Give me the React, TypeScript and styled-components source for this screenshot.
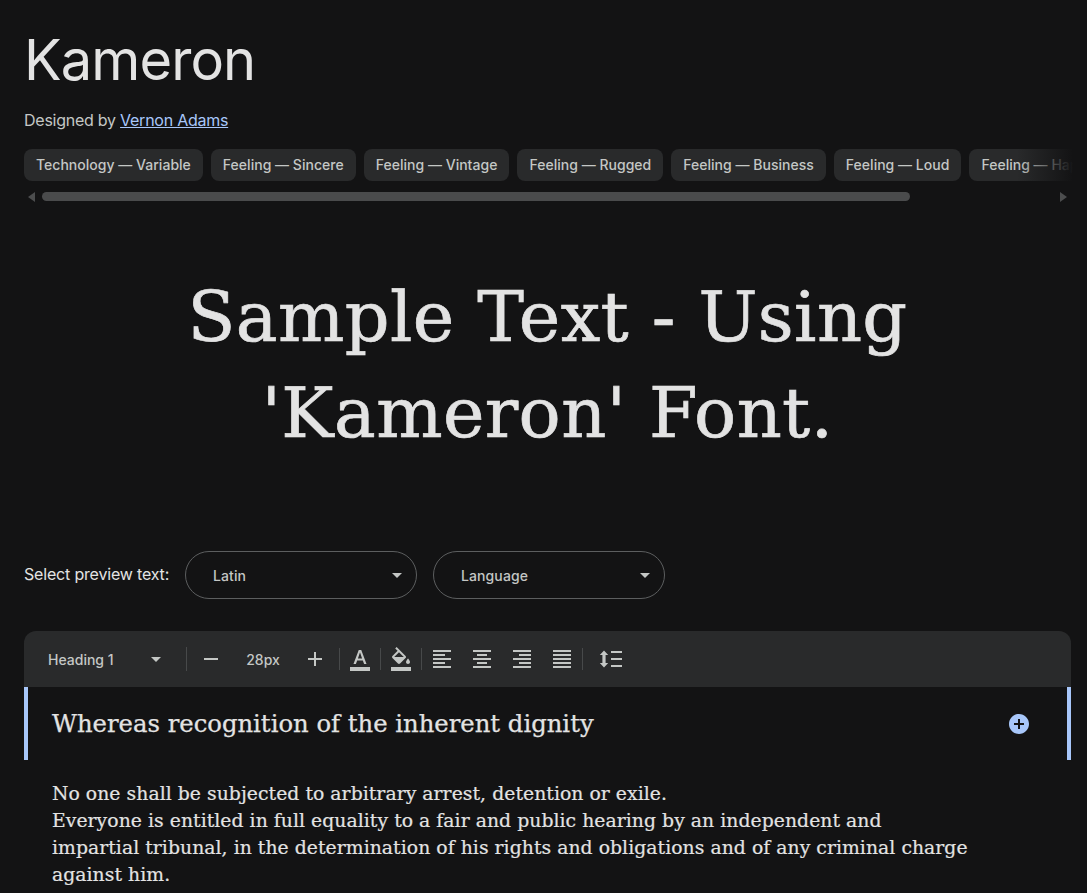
import React from "react"
import styled, { createGlobalStyle } from "styled-components"
import {
  MdAdd,
  MdAddCircle,
  MdArrowDropDown,
  MdFormatAlignCenter,
  MdFormatAlignJustify,
  MdFormatAlignLeft,
  MdFormatAlignRight,
  MdFormatColorFill,
  MdFormatColorText,
  MdRemove,
} from "react-icons/md"

const tags = [
  "Technology — Variable",
  "Feeling — Sincere",
  "Feeling — Vintage",
  "Feeling — Rugged",
  "Feeling — Business",
  "Feeling — Loud",
  "Feeling — Happy",
]

const Global = createGlobalStyle`
  html, body {
    margin: 0;
    height: 893px;
    overflow: hidden;
    background: #131314;
  }
`

const Page = styled.div`
  padding: 0 16px 0 24px;
  color: #e3e3e3;
  font-family: "Inter", "Open Sans", sans-serif;
`

const Title = styled.h1`
  margin: 0;
  padding-top: 26px;
  font-size: 56px;
  line-height: 68px;
  font-weight: 400;
  letter-spacing: -0.9px;
`

const Byline = styled.p`
  margin: 14px 0 0;
  font-size: 16px;
  line-height: 24px;
  letter-spacing: -0.25px;
  color: #c4c7c5;

  a {
    color: #a8c7fa;
  }
`

const TagScroller = styled.div`
  position: relative;
  margin: 17px -16px 0 0;
`

const TagRow = styled.div`
  display: flex;
  gap: 8px;
  overflow: hidden;
`

const Tag = styled.span`
  flex: none;
  padding: 0 12px;
  height: 32px;
  line-height: 32px;
  border-radius: 8px;
  background: #292a2b;
  font-size: 14px;
  font-weight: 500;
  letter-spacing: 0.02px;
  color: #c4c7c5;
`

const TagFade = styled.div`
  position: absolute;
  top: 0;
  right: 0;
  width: 70px;
  height: 32px;
  background: linear-gradient(to right, rgba(19, 19, 20, 0), #131314 80%);
`

const ScrollBar = styled.div`
  display: flex;
  align-items: center;
  height: 9px;
  margin: 11px 16px 0 0;
`

const ScrollArrow = styled.span<{ $right?: boolean }>`
  width: 0;
  height: 0;
  border-style: solid;
  border-color: transparent;
  border-width: 5px 0 5px 7px;
  border-left-color: #4c4d4e;
  margin: 0 4px 0 auto;
  ${p =>
    !p.$right &&
    `
    border-width: 5px 7px 5px 0;
    border-right-color: #4c4d4e;
    margin: 0 0 0 4px;
  `}
`

const ScrollThumb = styled.div`
  width: 868px;
  height: 9px;
  margin-left: 7px;
  border-radius: 5px;
  background: #4a4b4c;
`

const Preview = styled.div`
  margin-top: 68px;
  text-align: center;
  font-family: "DejaVu Serif", serif;
  font-size: 70px;
  line-height: 96px;
  letter-spacing: 0.4px;
  -webkit-text-stroke: 0.7px #e3e3e3;
`

const Controls = styled.div`
  display: flex;
  align-items: center;
  margin-top: 90px;
`

const ControlsLabel = styled.span`
  width: 161px;
  padding-bottom: 2px;
  font-size: 16px;
  letter-spacing: -0.18px;
  color: #e3e3e3;
`

const Select = styled.div`
  box-sizing: border-box;
  display: flex;
  align-items: center;
  justify-content: space-between;
  width: 232px;
  height: 48px;
  margin-right: 16px;
  padding: 0 7px 0 27px;
  border: 1px solid #5c5e5f;
  border-radius: 24px;
  font-size: 14px;
  font-weight: 500;
  letter-spacing: 0.1px;
  color: #c4c7c5;
`

const Caret = styled(MdArrowDropDown)`
  flex: none;
  color: #c4c7c5;
`

const Toolbar = styled.div`
  display: flex;
  align-items: center;
  height: 56px;
  margin-top: 32px;
  padding-left: 24px;
  border-radius: 12px 12px 0 0;
  background: #292a2b;
  font-size: 14px;
  font-weight: 500;
  letter-spacing: 0;
  color: #c4c7c5;
`

const StyleSelect = styled.div`
  display: flex;
  align-items: center;
  justify-content: space-between;
  width: 138px;
  padding-right: 18px;
  box-sizing: border-box;
`

const Divider = styled.span<{ $tall?: boolean }>`
  flex: none;
  width: 1px;
  height: ${p => (p.$tall ? 24 : 22)}px;
  background: #47494a;
`

const ToolButton = styled.span<{ $width: number }>`
  flex: none;
  display: flex;
  align-items: center;
  justify-content: center;
  width: ${p => p.$width}px;
  color: #c4c7c5;
`

const SelectedRow = styled.div`
  display: flex;
  align-items: center;
  justify-content: space-between;
  height: 73px;
  padding: 0 36px 0 24px;
  border-left: 4px solid #a8c7fa;
  border-right: 4px solid #a8c7fa;
  font-family: "DejaVu Serif", serif;
  font-size: 24.3px;
  -webkit-text-stroke: 0.25px #e3e3e3;
`

const AddButton = styled(MdAddCircle)`
  flex: none;
  color: #a8c7fa;
`

const Body = styled.p`
  margin: 20px 0 0;
  padding: 0 101px 0 28px;
  font-family: "DejaVu Serif", serif;
  font-size: 18.8px;
  line-height: 27px;
  letter-spacing: 0.05px;
  -webkit-text-stroke: 0.2px #e3e3e3;
`

const LineSpacingIcon = () => (
  <svg width="24" height="24" viewBox="0 0 24 24" fill="currentColor">
    <path d="M5 3.5 9.2 8H6.6v8h2.6L5 20.5.8 16h2.6V8H.8z" />
    <path d="M12 4h11v2H12zM12 11h11v2H12zM12 18h11v2H12z" />
  </svg>
)

export default function App() {
  return (
    <Page>
      <Global />
      <Title>Kameron</Title>
      <Byline>
        Designed by <a href="#">Vernon Adams</a>
      </Byline>
      <TagScroller>
        <TagRow>
          {tags.map(t => (
            <Tag key={t}>{t}</Tag>
          ))}
        </TagRow>
        <TagFade />
        <ScrollBar>
          <ScrollArrow />
          <ScrollThumb />
          <ScrollArrow $right />
        </ScrollBar>
      </TagScroller>
      <Preview>
        Sample Text - Using
        <br />
        'Kameron' Font.
      </Preview>
      <Controls>
        <ControlsLabel>Select preview text:</ControlsLabel>
        <Select>
          Latin
          <Caret size={24} />
        </Select>
        <Select>
          Language
          <Caret size={24} />
        </Select>
      </Controls>
      <Toolbar>
        <StyleSelect>
          Heading 1
          <Caret size={24} />
        </StyleSelect>
        <Divider $tall />
        <ToolButton $width={48}>
          <MdRemove size={24} />
        </ToolButton>
        <ToolButton $width={56}>28px</ToolButton>
        <ToolButton $width={48}>
          <MdAdd size={24} />
        </ToolButton>
        <Divider />
        <ToolButton $width={40}>
          <MdFormatColorText size={24} />
        </ToolButton>
        <Divider />
        <ToolButton $width={40}>
          <MdFormatColorFill size={24} />
        </ToolButton>
        <Divider />
        <ToolButton $width={40}>
          <MdFormatAlignLeft size={24} />
        </ToolButton>
        <ToolButton $width={40}>
          <MdFormatAlignCenter size={24} />
        </ToolButton>
        <ToolButton $width={40}>
          <MdFormatAlignRight size={24} />
        </ToolButton>
        <ToolButton $width={40}>
          <MdFormatAlignJustify size={24} />
        </ToolButton>
        <Divider />
        <ToolButton $width={56}>
          <LineSpacingIcon />
        </ToolButton>
      </Toolbar>
      <SelectedRow>
        Whereas recognition of the inherent dignity
        <AddButton size={24} />
      </SelectedRow>
      <Body>
        No one shall be subjected to arbitrary arrest, detention or exile.
        <br />
        Everyone is entitled in full equality to a fair and public hearing by an
        independent and impartial tribunal, in the determination of his rights and
        obligations and of any criminal charge against him.
      </Body>
    </Page>
  )
}
